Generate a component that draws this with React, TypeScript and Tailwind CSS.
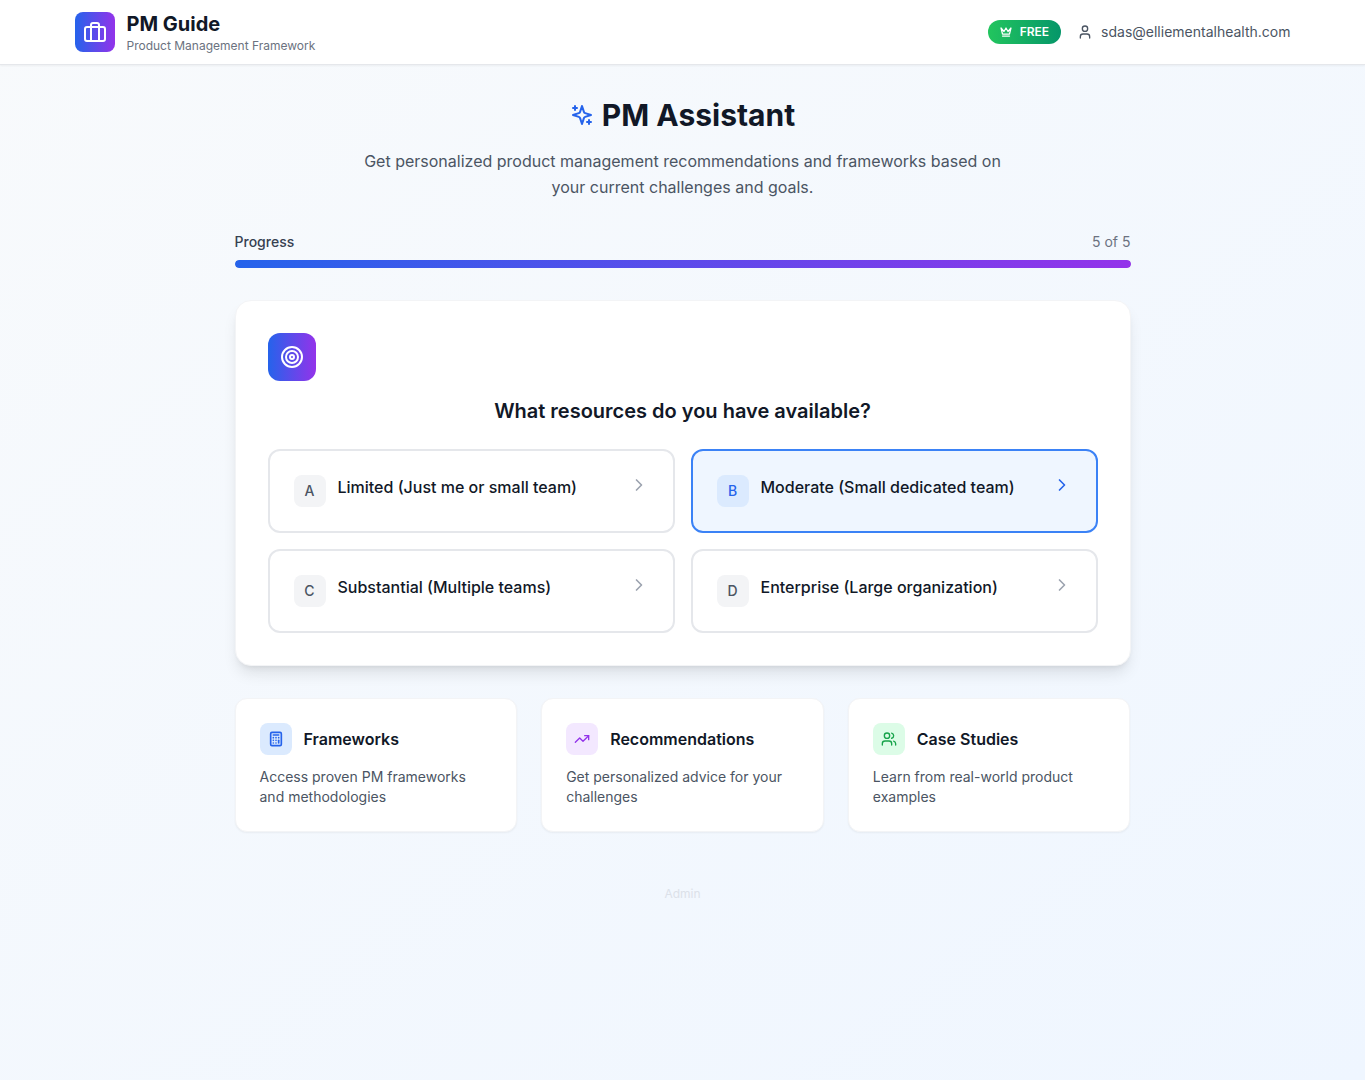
import { useState } from "react";
import {
  Calculator,
  ChevronRight,
  Target,
  TrendingUp,
  User,
} from "lucide-react";

const options = [
  "Limited (Just me or small team)",
  "Moderate (Small dedicated team)",
  "Substantial (Multiple teams)",
  "Enterprise (Large organization)",
];

const features = [
  {
    icon: Calculator,
    title: "Frameworks",
    description: "Access proven PM frameworks and methodologies",
    iconStyle: "bg-[#dbeafe] text-[#2563eb]",
    strokeWidth: 2.5,
  },
  {
    icon: TrendingUp,
    title: "Recommendations",
    description: "Get personalized advice for your challenges",
    iconStyle: "bg-[#f3e8ff] text-[#9333ea]",
    strokeWidth: 2,
  },
  {
    icon: UsersIcon,
    title: "Case Studies",
    description: "Learn from real-world product examples",
    iconStyle: "bg-[#dcfce7] text-[#16a34a]",
    strokeWidth: 2,
  },
];

const iconProps = {
  viewBox: "0 0 24 24",
  fill: "none",
  stroke: "currentColor",
  strokeLinecap: "round" as const,
  strokeLinejoin: "round" as const,
};

type IconProps = {
  className?: string;
  strokeWidth?: number;
};

function BriefcaseIcon({ className, strokeWidth = 2 }: IconProps) {
  return (
    <svg
      {...iconProps}
      strokeWidth={strokeWidth}
      className={className}
      aria-hidden="true"
    >
      <rect width="20" height="14" x="2" y="7" rx="2" ry="2" />
      <path d="M16 21V5a2 2 0 0 0-2-2h-4a2 2 0 0 0-2 2v16" />
    </svg>
  );
}

function CrownIcon({ className, strokeWidth = 2 }: IconProps) {
  return (
    <svg
      {...iconProps}
      strokeWidth={strokeWidth}
      className={className}
      aria-hidden="true"
    >
      <path d="m2 4 3 12h14l3-12-6 7-4-7-4 7-6-7zm3 16h14" />
    </svg>
  );
}

function SparklesIcon({ className, strokeWidth = 2 }: IconProps) {
  return (
    <svg
      {...iconProps}
      strokeWidth={strokeWidth}
      className={className}
      aria-hidden="true"
    >
      <path d="m12 3-1.912 5.813a2 2 0 0 1-1.275 1.275L3 12l5.813 1.912a2 2 0 0 1 1.275 1.275L12 21l1.912-5.813a2 2 0 0 1 1.275-1.275L21 12l-5.813-1.912a2 2 0 0 1-1.275-1.275L12 3Z" />
      <path d="M5 3v4" />
      <path d="M19 17v4" />
      <path d="M3 5h4" />
      <path d="M17 19h4" />
    </svg>
  );
}

function UsersIcon({ className, strokeWidth = 2 }: IconProps) {
  return (
    <svg
      {...iconProps}
      strokeWidth={strokeWidth}
      className={className}
      aria-hidden="true"
    >
      <path d="M16 21v-2a4 4 0 0 0-4-4H6a4 4 0 0 0-4 4v2" />
      <circle cx="9" cy="7" r="4" />
      <path d="M22 21v-2a4 4 0 0 0-3-3.87" />
      <path d="M16 3.13a4 4 0 0 1 0 7.75" />
    </svg>
  );
}

function Header() {
  return (
    <header className="bg-white border-b border-[#e5e7eb] shadow-xs">
      <div className="max-w-7xl mx-auto px-8 h-16 flex items-center justify-between">
        <div className="flex items-center gap-3">
          <div className="w-10 h-10 rounded-lg bg-linear-to-r/srgb from-[#2563eb] to-[#9333ea] flex items-center justify-center">
            <BriefcaseIcon className="w-6 h-6 text-white" />
          </div>
          <div>
            <p className="text-xl font-bold text-[#111827]">PM Guide</p>
            <p className="text-xs text-[#6b7280]">
              Product Management Framework
            </p>
          </div>
        </div>

        <div className="flex items-center gap-4">
          <span className="flex items-center gap-2 px-3 py-1 rounded-full bg-linear-to-r/srgb from-[#22c55e] to-[#059669] text-xs font-semibold text-white">
            <CrownIcon className="w-3 h-3" strokeWidth={2.5} />
            FREE
          </span>
          <div className="flex items-center gap-2 text-sm text-[#4b5563]">
            <User className="w-4 h-4" />
            <span>sdas@elliementalhealth.com</span>
          </div>
        </div>
      </div>
    </header>
  );
}

export default function App() {
  const [selected, setSelected] = useState(1);

  return (
    <div className="min-h-screen bg-linear-to-br/srgb from-[#f8fafc] to-[#eff6ff] font-['Inter',sans-serif] text-[#111827]">
      <Header />

      <main className="max-w-4xl mx-auto py-8">
        <div className="text-center mb-8">
          <div className="flex items-center justify-center gap-2 mb-[15px]">
            <SparklesIcon className="w-6 h-6 text-[#2563eb]" />
            <h1 className="text-3xl font-bold">PM Assistant</h1>
          </div>
          <p className="max-w-2xl mx-auto leading-[26px] text-[#4b5563]">
            Get personalized product management recommendations and frameworks
            based on your current challenges and goals.
          </p>
        </div>

        <div className="mb-8">
          <div className="flex justify-between mb-2 text-sm">
            <span className="font-medium text-[#374151]">Progress</span>
            <span className="text-[#6b7280]">5 of 5</span>
          </div>
          <div className="h-2 rounded-full bg-[#e5e7eb] overflow-hidden">
            <div className="h-full w-full rounded-full bg-linear-to-r/srgb from-[#2563eb] to-[#9333ea]" />
          </div>
        </div>

        <section className="bg-white border border-[#f3f4f6] rounded-2xl shadow-lg p-8 mb-8">
          <div className="w-12 h-12 mb-4 rounded-xl bg-linear-to-r/srgb from-[#2563eb] to-[#9333ea] flex items-center justify-center">
            <Target className="w-6 h-6 text-white" />
          </div>
          <h2 className="text-xl font-semibold text-center mb-6">
            What resources do you have available?
          </h2>

          <div className="grid md:grid-cols-2 gap-4">
            {options.map((option, index) => {
              const active = index === selected;

              return (
                <button
                  key={option}
                  type="button"
                  aria-pressed={active}
                  onClick={() => setSelected(index)}
                  className={`flex items-start gap-3 p-6 rounded-xl border-2 text-left ${
                    active
                      ? "border-[#3b82f6] bg-[#eff6ff]"
                      : "border-[#e5e7eb] bg-white"
                  }`}
                >
                  <span
                    className={`w-8 h-8 rounded-lg flex items-center justify-center text-sm font-medium ${
                      active
                        ? "bg-[#dbeafe] text-[#2563eb]"
                        : "bg-[#f3f4f6] text-[#4b5563]"
                    }`}
                  >
                    {String.fromCharCode(65 + index)}
                  </span>
                  <span className="flex-1 font-medium">{option}</span>
                  <ChevronRight
                    className={`w-5 h-5 ${
                      active ? "text-[#2563eb]" : "text-[#9ca3af]"
                    }`}
                  />
                </button>
              );
            })}
          </div>
        </section>

        <div className="grid md:grid-cols-3 gap-6">
          {features.map((item) => {
            const Icon = item.icon;

            return (
              <div
                key={item.title}
                className="bg-white border border-[#f3f4f6] rounded-xl shadow-xs p-6"
              >
                <div className="flex items-center gap-3 mb-3">
                  <div
                    className={`w-8 h-8 rounded-lg flex items-center justify-center ${item.iconStyle}`}
                  >
                    <Icon className="w-4 h-4" strokeWidth={item.strokeWidth} />
                  </div>
                  <h3 className="font-semibold">{item.title}</h3>
                </div>
                <p className="text-sm text-[#4b5563]">{item.description}</p>
              </div>
            );
          })}
        </div>
      </main>

      <footer className="py-4 text-center">
        <button type="button" className="py-1 text-xs text-[#dce1e9]">
          Admin
        </button>
      </footer>
    </div>
  );
}
